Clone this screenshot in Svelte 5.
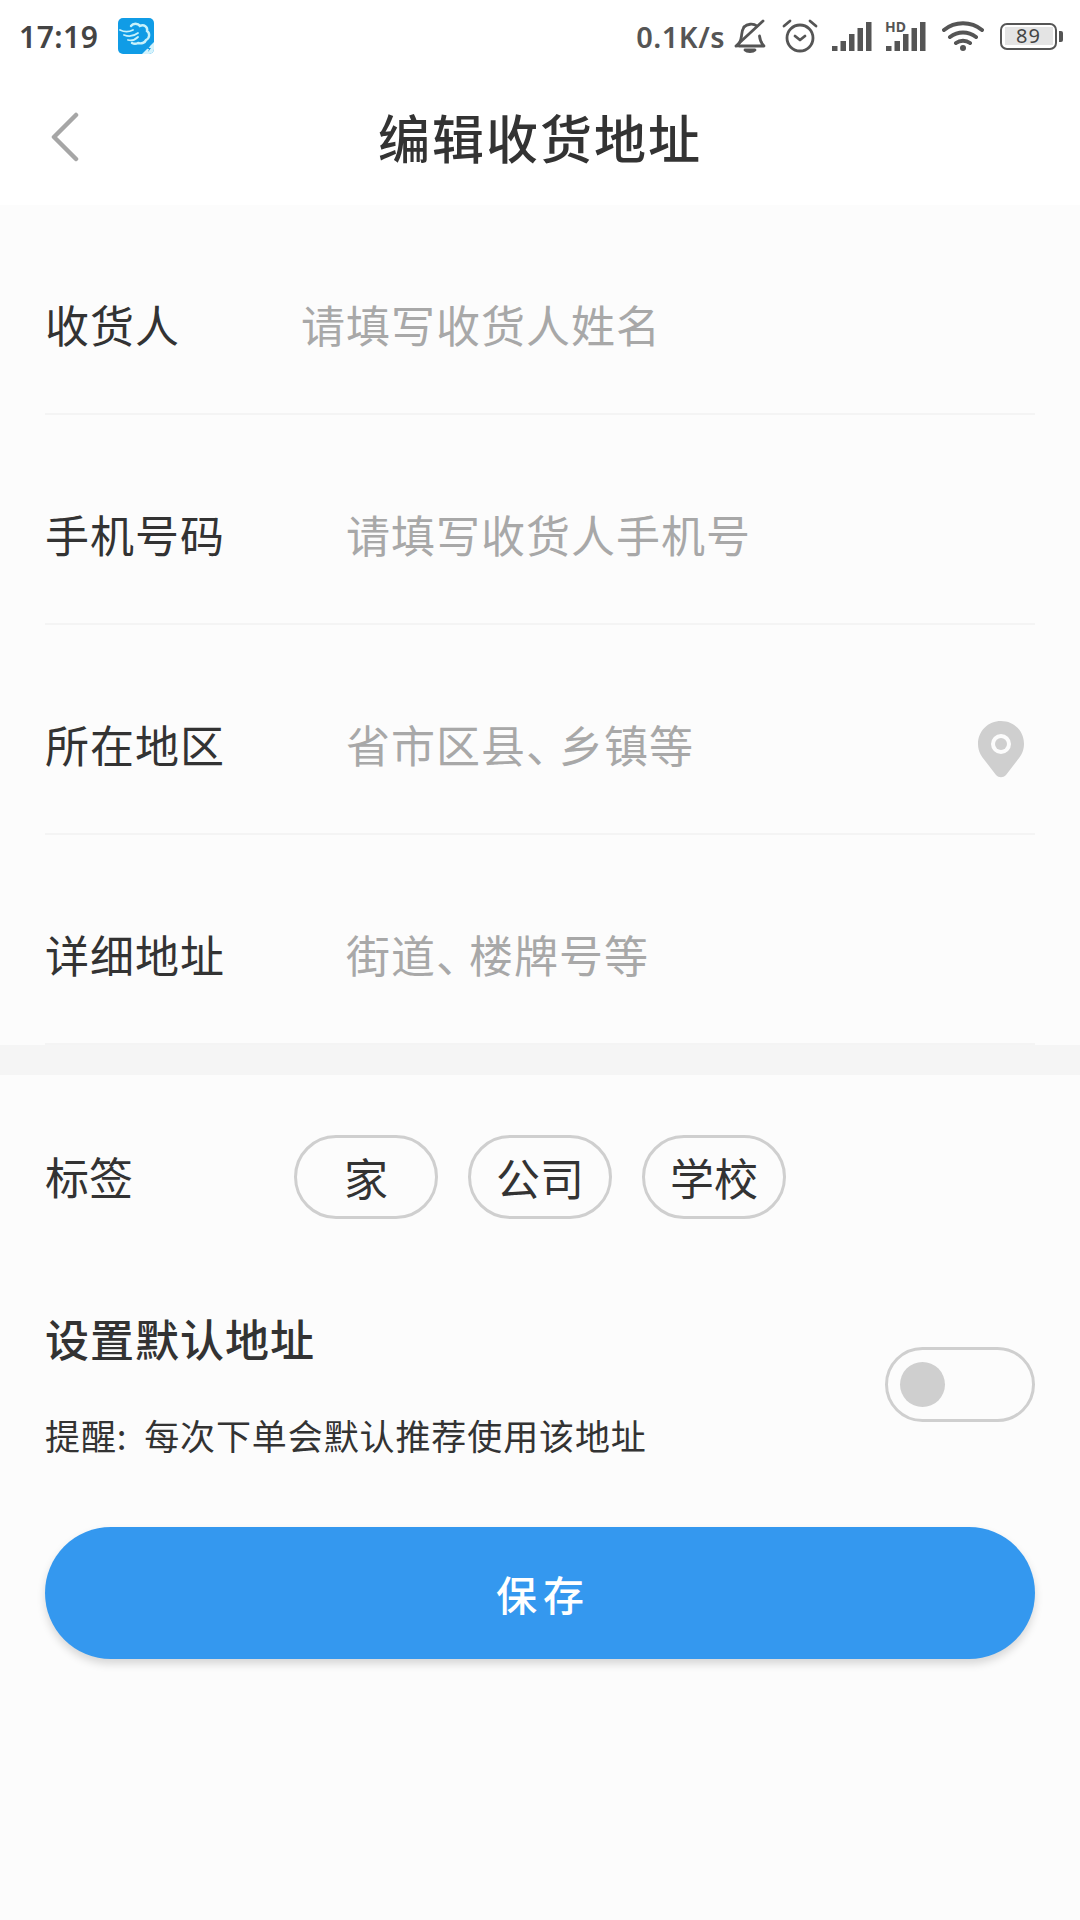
<script>
  const fields = [
    { label: '收货人', hint: '请填写收货人姓名', short: true },
    { label: '手机号码', hint: '请填写收货人手机号' },
    { label: '所在地区', hint: '省市区县、乡镇等', pin: true },
    { label: '详细地址', hint: '街道、楼牌号等' }
  ];
  const tags = ['家', '公司', '学校'];
  const bars = [5, 10, 17, 23, 29];
</script>

<div class="page">
  <div class="status">
    <span class="time">17:19</span>
    <svg class="app-icon" viewBox="0 0 36 36">
      <rect width="36" height="36" rx="5" fill="#109ce6" />
      <path d="M2 12c4 2 9 2 13 0M6 17c5 2 10 1 14-2M10 22c4 1 7 0 10-3" fill="none" stroke="#c8f2fb" stroke-width="1.800" stroke-linecap="round" />
      <path d="M13 8c2-3 7-3 9 0 4-2 8 1 7 5 3 2 3 7-1 9-1 3-5 4-8 3-2 1-4 1-6 0" fill="none" stroke="#c8f2fb" stroke-width="2.400" stroke-linecap="round" />
      <path d="M36 24v7a5 5 0 0 1-5 5h-7z" fill="#d5f3fc" />
      <path d="M32 27l-3 4h2l-1 3 3-4h-2z" fill="#109ce6" />
    </svg>
    <span class="spacer"></span>
    <span class="speed">0.1K/s</span>
    <svg class="s-icon bell" viewBox="0 0 32 34" fill="none" stroke="#555" stroke-width="2.800" stroke-linecap="round" stroke-linejoin="round">
      <path d="M5 27h25c-3-3-4-5-4.500-10M10 8c-2 3-2 5-2.500 9-.5 4-1.500 7-4.500 10" />
      <path d="M10 8c3-3 9-4 13-1" />
      <path d="M2 27L29 2" />
      <path d="M11 31c2 2 8 2 10 0z" fill="#555" />
    </svg>
    <svg class="s-icon alarm" viewBox="0 0 36 34" fill="none" stroke="#555" stroke-width="2.800" stroke-linecap="round" stroke-linejoin="round">
      <circle cx="18" cy="19" r="13" />
      <path d="M13 17l5 4 5-4M2 7l6-5M34 7l-6-5" />
    </svg>
    <svg class="s-icon signal" viewBox="0 0 40 29" fill="#555">
      {#each bars as h, i}
        <rect x={i * 8.5} y={29 - h} width="5.500" height={h} />
      {/each}
    </svg>
    <div class="hd-wrap">
      <span class="hd">HD</span>
      <svg class="s-icon signal" viewBox="0 0 40 29" fill="#555">
        {#each bars as h, i}
          <rect x={i * 8.5} y={29 - h} width="5.500" height={h} />
        {/each}
      </svg>
    </div>
    <svg class="s-icon wifi" viewBox="0 0 42 30" fill="none" stroke="#555" stroke-width="4" stroke-linecap="round">
      <path d="M2 9c11-9 27-9 38 0M8 16c8-6 18-6 26 0M14 22c4-3 10-3 14 0" />
      <circle cx="21" cy="27" r="3" fill="#555" stroke="none" />
    </svg>
    <div class="battery">
      <div class="cell"><span>89</span></div>
      <i></i>
    </div>
  </div>

  <div class="head">
    <svg class="back" viewBox="0 0 28 50" fill="none" stroke="#a6a6a6" stroke-width="4.500" stroke-linecap="round" stroke-linejoin="round">
      <path d="M25 3L3 25l22 22" />
    </svg>
    <h1>编辑收货地址</h1>
  </div>

  <div class="fields">
    {#each fields as f}
      <div class="field">
        <span class="label" class:short={f.short}>{f.label}</span>
        <span class="hint">
          {#each f.hint.split('、') as part, i}
            {#if i > 0}<span class="dun">、</span>{/if}{part}
          {/each}
        </span>
        {#if f.pin}
          <svg class="pin" viewBox="0 0 48 58">
            <path fill-rule="evenodd" fill="#cfcfcf" d="M24 1C11 1 1 11 1 24c0 8 4 13 8 18l10 13c3 3 7 3 10 0l10-13c4-5 8-10 8-18C47 11 37 1 24 1zm0 13a10 10 0 1 1 0 20 10 10 0 0 1 0-20z" />
            <circle cx="24" cy="24" r="6" fill="#cfcfcf" />
          </svg>
        {/if}
      </div>
    {/each}
  </div>

  <div class="band"></div>

  <div class="lower">
    <div class="tag-row">
      <span class="tag-label">标签</span>
      <div class="tags">
        {#each tags as t}
          <span class="tag">{t}</span>
        {/each}
      </div>
    </div>

    <div class="default-row">
      <div class="default-text">
        <div class="default-title">设置默认地址</div>
        <div class="default-note">提醒: 每次下单会默认推荐使用该地址</div>
      </div>
      <div class="toggle"><i></i></div>
    </div>

    <button class="save">保存</button>
  </div>
</div>

<style>
  :global(body) {
    margin: 0;
    background: #fcfcfc;
  }

  .page {
    width: 1080px;
    height: 1920px;
    overflow: hidden;
    background: #fcfcfc;
    color: #333;
    font-family: "Noto Sans CJK SC", "Noto Sans", sans-serif;
  }

  .status {
    height: 72px;
    padding: 0 17px 0 19px;
    display: flex;
    align-items: center;
    background: #fff;
    color: #444;
    box-sizing: border-box;
  }
  .time {
    font-family: "Noto Sans", sans-serif;
    font-size: 30px;
    font-weight: 600;
    letter-spacing: 0.5px;
    width: 99px;
  }
  .app-icon {
    width: 36px;
    height: 36px;
  }
  .spacer {
    flex: 1;
  }
  .speed {
    font-family: "Noto Sans", sans-serif;
    font-size: 29px;
    font-weight: 600;
    color: #555;
    letter-spacing: 0.5px;
    margin-right: 9px;
  }
  .s-icon {
    display: block;
  }
  .bell {
    width: 32px;
    height: 34px;
    margin-right: 16px;
  }
  .alarm {
    width: 36px;
    height: 34px;
    margin-right: 14px;
  }
  .signal {
    width: 40px;
    height: 29px;
  }
  .hd-wrap {
    position: relative;
    margin: 0 16px 0 14px;
  }
  .hd {
    position: absolute;
    left: -1px;
    top: -2px;
    padding-right: 2px;
    background: #fff;
    font-family: "Noto Sans", sans-serif;
    font-size: 14px;
    font-weight: 700;
    line-height: 13px;
    color: #555;
  }
  .wifi {
    width: 42px;
    height: 30px;
    margin-right: 16px;
  }
  .battery {
    display: flex;
    align-items: center;
    gap: 2px;
  }
  .cell {
    width: 48px;
    height: 18px;
    border: 2.500px solid #555;
    border-radius: 7px;
    padding: 2.500px;
    box-sizing: content-box;
    display: flex;
  }
  .cell span {
    flex: 1;
    background: #e4e4e4;
    text-align: center;
    font-family: "Noto Sans", sans-serif;
    font-size: 20px;
    line-height: 18px;
    color: #444;
    letter-spacing: 1px;
  }
  .battery i {
    width: 4px;
    height: 11px;
    background: #555;
    border-radius: 0 2px 2px 0;
  }

  .head {
    height: 133px;
    position: relative;
    background: #fff;
    display: flex;
    align-items: center;
    justify-content: center;
  }
  .back {
    position: absolute;
    left: 51px;
    top: 40px;
    width: 28px;
    height: 50px;
  }
  h1 {
    margin: 0;
    font-size: 52px;
    font-weight: 500;
    letter-spacing: 2px;
    color: #333;
    line-height: 1;
    position: relative;
    top: -2px;
  }

  .fields {
    padding: 0 45px;
    height: 840px;
  }
  .field {
    height: 210px;
    box-sizing: border-box;
    border-bottom: 2px solid #f4f4f4;
    padding-top: 29px;
    display: flex;
    align-items: center;
    font-size: 44px;
  }
  .label {
    width: 301px;
    letter-spacing: 1px;
    color: #333;
    flex: none;
  }
  .label.short {
    width: 256px;
  }
  .hint {
    color: #a8a8a8;
    letter-spacing: 1px;
    flex: 1;
  }
  .dun {
    letter-spacing: -11px;
  }
  .pin {
    width: 48px;
    height: 58px;
    margin: 10px 10px 0 0;
  }

  .band {
    height: 30px;
    background: #f5f5f5;
  }

  .lower {
    padding: 0 45px;
  }
  .tag-row {
    display: flex;
    align-items: center;
    margin-top: 60px;
    height: 84px;
  }
  .tag-label {
    width: 249px;
    font-size: 44px;
    color: #333;
    margin-top: -2px;
  }
  .tags {
    display: flex;
    gap: 30px;
  }
  .tag {
    width: 144px;
    height: 84px;
    box-sizing: border-box;
    border: 3px solid #cfcfcf;
    border-radius: 42px;
    display: flex;
    align-items: center;
    justify-content: center;
    font-size: 44px;
    color: #333;
  }

  .default-row {
    display: flex;
    justify-content: space-between;
    margin-top: 89px;
    height: 171px;
  }
  .default-title {
    font-size: 44px;
    font-weight: 500;
    line-height: 60px;
    letter-spacing: 1px;
  }
  .default-note {
    font-size: 35px;
    line-height: 48px;
    margin-top: 43px;
    letter-spacing: 0.9px;
    word-spacing: 8px;
  }
  .toggle {
    width: 150px;
    height: 75px;
    margin-top: 39px;
    box-sizing: border-box;
    border: 3.500px solid #cfcfcf;
    border-radius: 38px;
    padding: 11.500px;
  }
  .toggle i {
    display: block;
    width: 45px;
    height: 45px;
    border-radius: 50%;
    background: #cfcfcf;
  }

  .save {
    display: block;
    width: 990px;
    height: 132px;
    margin-top: 48px;
    padding: 0 0 0 6px;
    border: 0;
    border-radius: 66px;
    background: #3498ef;
    color: #fff;
    font-family: inherit;
    font-size: 41px;
    font-weight: 500;
    letter-spacing: 6px;
    box-shadow: 0 5px 9px rgba(0, 0, 0, 0.15);
  }
</style>
